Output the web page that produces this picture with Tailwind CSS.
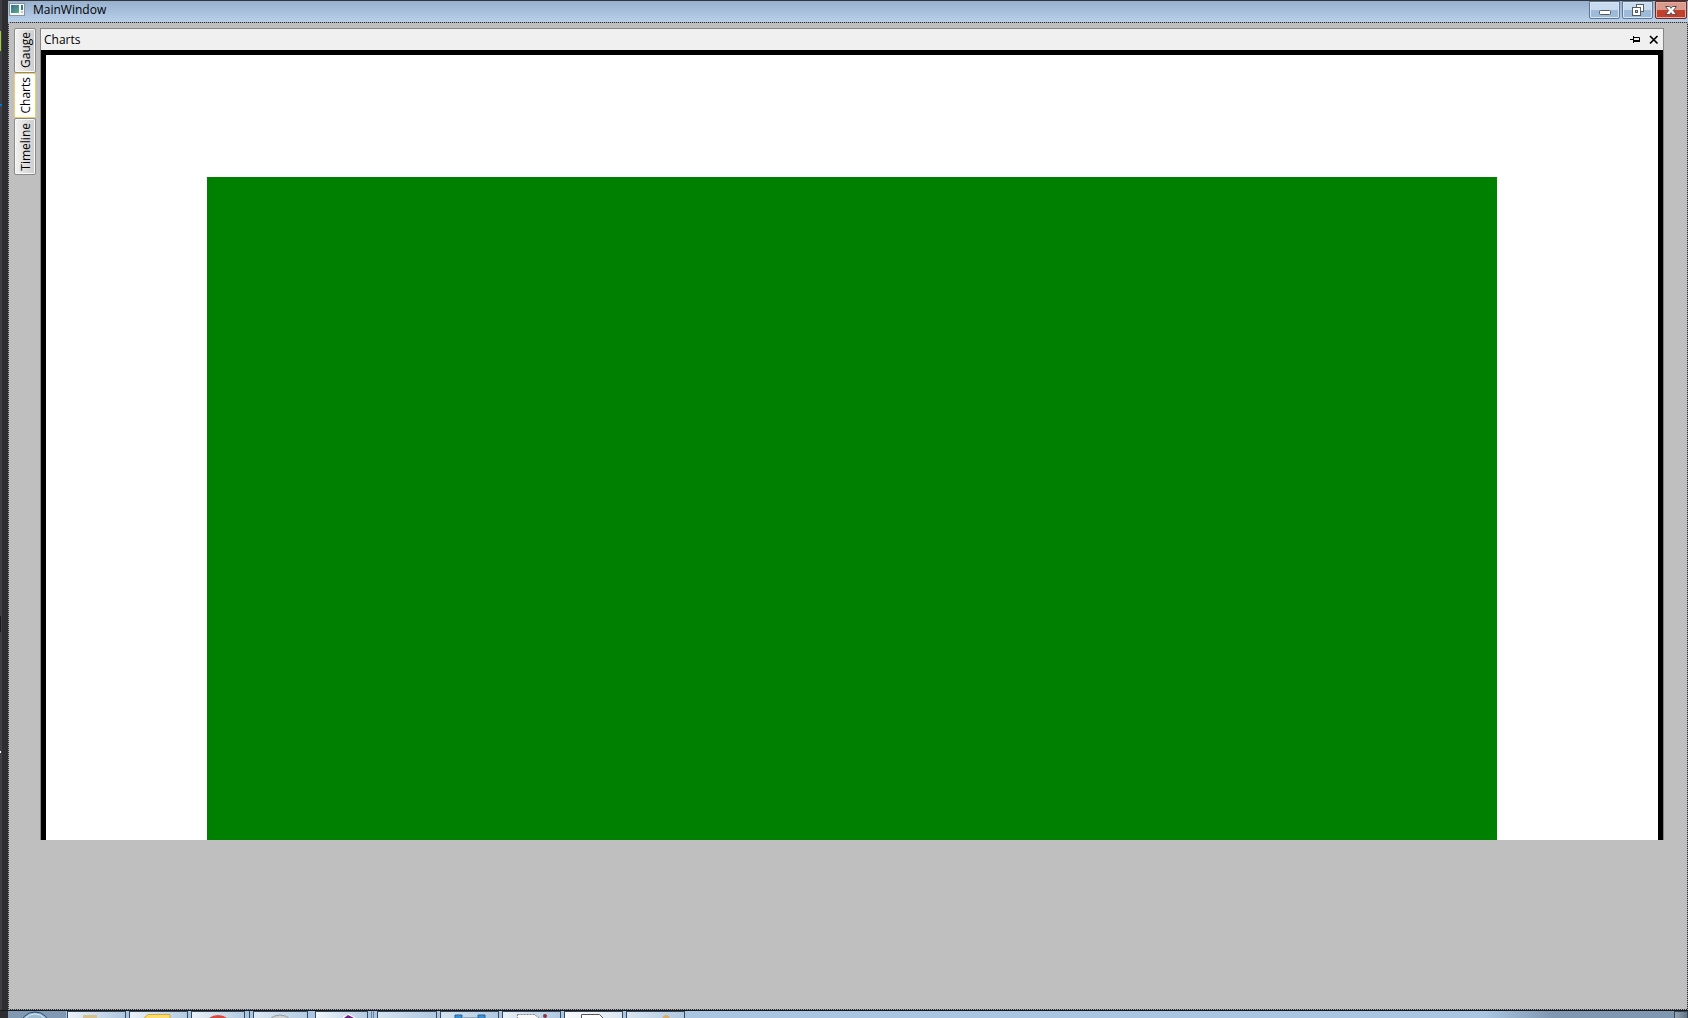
<!DOCTYPE html>
<html lang="en">
<head>
  <meta charset="UTF-8" />
  <title>MainWindow</title>
  <script src="https://cdn.jsdelivr.net/npm/@tailwindcss/browser@4"></script>
</head>
<body class="h-screen flex flex-col overflow-hidden bg-[#2d2d32] font-['Open_Sans',sans-serif] text-xs text-black">
  <div class="flex-1 min-h-0 flex">

    <!-- Window behind -->
    <div class="w-2 shrink-0 flex flex-col bg-[linear-gradient(90deg,#3f3f46_2px,#2d2d32_2px)]">
      <div class="mt-[31px] w-px h-5 bg-[#a4cf3c]"></div>
      <div class="mt-[53px] w-0.5 h-0.5 bg-[#007acc]"></div>
      <div class="mt-[510px] w-px h-4 bg-[#1b1b1c]"></div>
      <div class="mt-[119px] w-px h-0.5 bg-white"></div>
    </div>

    <div class="flex-1 min-w-0 flex flex-col">
      <!-- Title bar -->
      <header class="h-[22px] shrink-0 flex items-start pl-px pr-px border-t border-[#33373c] bg-linear-to-b from-[#97b0cf] to-[#b9d0ea]">
        <svg class="w-4 h-4" viewBox="0 0 16 16">
          <defs>
            <linearGradient id="app" x1="0" y1="0" x2="1" y2="1">
              <stop offset="0" stop-color="#3c6c9c" />
              <stop offset="1" stop-color="#5eae7c" />
            </linearGradient>
          </defs>
          <rect x="0.5" y="2.5" width="15" height="12" fill="#f4f6f7" stroke="#8b949c" />
          <rect x="2" y="4" width="8" height="8" fill="url(#app)" />
          <rect x="12" y="4" width="2" height="5" fill="#3c7c80" />
          <rect x="12" y="10" width="2" height="2" fill="#c3cbd0" />
        </svg>
        <h1 class="flex-1 pl-2 leading-[18px]">MainWindow</h1>
        <div class="flex gap-0.5">
          <button aria-label="Minimize" class="w-[31px] h-[18px] flex items-center justify-center rounded-b-xs border border-[#5f7590] bg-linear-to-b from-[#c8dbee] from-50% to-[#9dbbd9] to-50% shadow-[inset_0_0_0_1px_#d6e5f4]">
            <svg class="w-4 h-4" viewBox="0 0 16 16">
              <rect x="2.5" y="8.5" width="11" height="4" rx="1" fill="#fff" stroke="#555c66" />
            </svg>
          </button>
          <button aria-label="Restore" class="w-[31px] h-[18px] flex items-center justify-center rounded-b-xs border border-[#5f7590] bg-linear-to-b from-[#c8dbee] from-50% to-[#9dbbd9] to-50% shadow-[inset_0_0_0_1px_#d6e5f4]">
            <svg class="w-4 h-4" viewBox="0 0 16 16" fill="#fff" stroke="#555c66">
              <rect x="6.5" y="2.5" width="7" height="7" />
              <rect x="9.5" y="5.5" width="1" height="1" fill="#a9c3de" />
              <rect x="2.5" y="5.5" width="8" height="8" />
              <rect x="5.5" y="8.5" width="2" height="2" fill="#a9c3de" />
            </svg>
          </button>
          <button aria-label="Close" class="w-[32px] h-[18px] flex items-center justify-center rounded-b-xs border border-[#6b2a26] bg-linear-to-b from-[#dc9a8c] from-50% to-[#c0402c] to-50% shadow-[inset_0_0_0_1px_#e6ada2]">
            <svg class="w-4 h-4" viewBox="0 0 16 16">
              <path d="M2.500 4.500h4L8 6.300l1.500-1.800h4L10.300 8.500l3.200 4h-4L8 10.700l-1.500 1.800h-4l3.200-4z" fill="#fff" stroke="#5a4a50" stroke-linejoin="round" />
            </svg>
          </button>
        </div>
      </header>

      <!-- Client area -->
      <main class="flex-1 min-h-0 flex items-start border border-dotted border-[#a5a5a5] bg-[#bfbfbf] bg-clip-padding pt-[5px] pl-[5px] pr-[23px]">
        <nav class="w-[22px] shrink-0 flex flex-col" role="tablist">
          <button role="tab" class="h-[45px] flex items-center justify-center pl-0.5 rounded-xs border border-[#8a8a8a] bg-linear-to-r from-[#f2f2f2] to-[#cdcdcd] shadow-[inset_0_0_0_1px_#fafafa]">
            <span class="rotate-180 [writing-mode:vertical-rl] leading-4">Gauge</span>
          </button>
          <button role="tab" aria-selected="true" class="h-[45px] flex items-center justify-center pl-0.5 rounded-xs border border-[#efcf62] bg-white">
            <span class="rotate-180 [writing-mode:vertical-rl] leading-4">Charts</span>
          </button>
          <button role="tab" class="h-[57px] flex items-center justify-center pl-0.5 rounded-xs border border-[#8a8a8a] bg-linear-to-r from-[#f2f2f2] to-[#cdcdcd] shadow-[inset_0_0_0_1px_#fafafa]">
            <span class="rotate-180 [writing-mode:vertical-rl] leading-4">Timeline</span>
          </button>
        </nav>

        <section class="flex-1 min-w-0 ml-1 border-x border-t border-[#868686]">
          <div class="h-[21px] flex items-center pl-[3px] pr-px bg-[#f0f0f0]">
            <h2 class="flex-1 leading-5">Charts</h2>
            <button aria-label="Auto hide" class="mr-[3px]">
              <svg class="w-4 h-4" viewBox="0 0 16 16" fill="none" stroke="#000">
                <path d="M3 7.500h3M6.500 4v7M7 5.500h5.500V9M7 8.500h6M7 9.500h6" />
              </svg>
            </button>
            <button aria-label="Close Charts">
              <svg class="w-4 h-4" viewBox="0 0 16 16" fill="none" stroke="#000" stroke-width="1.7">
                <path d="M4 4l7.500 7.500M11.500 4L4 11.500" />
              </svg>
            </button>
          </div>
          <div class="h-[790px] px-[5px] pt-[5px] bg-black">
            <div class="h-full px-[10%] pt-[122px] bg-white">
              <div class="h-full bg-[#008000]"></div>
            </div>
          </div>
        </section>
      </main>
    </div>
  </div>

  <!-- Taskbar -->
  <footer class="h-2 shrink-0 flex overflow-hidden border-t border-[#15181c] bg-[linear-gradient(90deg,#2d2d32_8px,#8299b3_8px,#8299b3_66px,#a9c5e2_66px,#a9c5e2_88%,#8097b1_92%)]">
    <svg class="ml-5 mr-[15px] w-8 h-8 shrink-0" viewBox="0 0 32 32">
      <circle cx="15" cy="16" r="15" fill="#9fbbd1" stroke="#234d75" />
      <circle cx="15" cy="16" r="13" fill="none" stroke="#d9e8f2" />
    </svg>
    <div class="flex gap-[3px]">
      <button aria-label="Explorer" class="w-[59px] h-10 flex justify-center items-start pt-0.5 border border-[#38485c] bg-linear-to-r from-[#eaf1f8] to-[#aec6df]">
        <svg class="w-8 h-8" viewBox="0 0 32 32"><path d="M2 1h14v3h12v24H2z" fill="#d5c28e" /></svg>
      </button>
      <button aria-label="Folder" class="w-[59px] h-10 flex justify-center items-start pt-0.5 border border-[#38485c] bg-linear-to-r from-[#eaf1f8] to-[#b4cbe2]">
        <svg class="w-8 h-8" viewBox="0 0 32 32"><path d="M1 4l4-3.500h22V30H1z" fill="#fbdc6c" stroke="#d5aa3a" /></svg>
      </button>
      <button aria-label="Browser" class="w-[54px] h-10 flex justify-center items-start pt-0.5 border border-[#38485c] bg-linear-to-r from-[#eaf1f8] to-[#b4cbe2]">
        <svg class="w-8 h-8" viewBox="0 0 32 32"><circle cx="16" cy="16" r="15" fill="#d94b41" /></svg>
      </button>
      <div class="w-0.5 h-10 border-r border-[#38485c]"></div>
      <button aria-label="Disc" class="w-[55px] h-10 flex justify-center items-start pt-0.5 border border-[#38485c] bg-linear-to-r from-[#dce8f3] to-[#b4cbe2]">
        <svg class="w-8 h-8" viewBox="0 0 32 32"><circle cx="15" cy="16" r="15" fill="#cfd2d3" stroke="#969ca1" /></svg>
      </button>
      <div class="w-px h-10"></div>
      <button aria-label="Visual Studio" class="w-[53px] h-10 flex justify-center items-start pt-0.5 border border-[#38485c] bg-linear-to-r from-[#f1f6fb] to-[#b4cbe2]">
        <svg class="w-8 h-8" viewBox="0 0 32 32"><path d="M17 3l6-3 7 4v25H13z" fill="#fff" /><path d="M18 4l4-3 6 3v20H18z" fill="#68217a" /></svg>
      </button>
      <div class="w-[3px] h-10 border-x border-[#6b829c]"></div>
      <button aria-label="Application" class="w-[60px] h-10 border border-[#38485c] bg-linear-to-r from-[#d5e3f0] to-[#b0c8e0]"></button>
      <button aria-label="Monitor" class="w-[59px] h-10 flex justify-center items-start pt-0.5 border border-[#38485c] bg-linear-to-r from-[#d5e3f0] to-[#b0c8e0]">
        <svg class="w-8 h-8" viewBox="0 0 32 32"><path d="M1 1h7v6H1zM24 1h7v6h-7z" fill="#3c8fd0" stroke="#20649c" /><path d="M8 3h15v3H8z" fill="#91a6b8" /></svg>
      </button>
      <button aria-label="Notepad" class="w-[59px] h-10 flex justify-center items-start pt-0.5 border border-[#38485c] bg-linear-to-r from-[#eaf1f8] to-[#b0c8e0]">
        <svg class="w-8 h-8" viewBox="0 0 32 32"><path d="M1.500 .5h17l5 4V30h-22z" fill="#fafafa" stroke="#7b8288" stroke-dasharray="2 1" /><circle cx="29" cy="2" r="2" fill="#8b3544" /></svg>
      </button>
      <button aria-label="Document" class="w-[59px] h-10 flex justify-center items-start pt-0.5 border border-[#38485c] bg-linear-to-r from-[#f8fafc] to-[#dce6f0]">
        <svg class="w-8 h-8" viewBox="0 0 32 32"><path d="M3.500 .5h18l5 5V30h-23z" fill="#fff" stroke="#555" /></svg>
      </button>
      <button aria-label="Paint" class="w-[59px] h-10 flex justify-center items-start pt-0.5 border border-[#38485c] bg-linear-to-r from-[#d9e5f1] to-[#b0c8e0]">
        <svg class="w-8 h-8" viewBox="0 0 32 32"><ellipse cx="26" cy="6" rx="4" ry="5" fill="#d7ad67" /></svg>
      </button>
    </div>
    <button aria-label="Show desktop" class="ml-auto w-[14px] h-10 border border-[#38485c] bg-linear-to-r from-[#94a4b2] to-[#637486]"></button>
  </footer>
</body>
</html>
